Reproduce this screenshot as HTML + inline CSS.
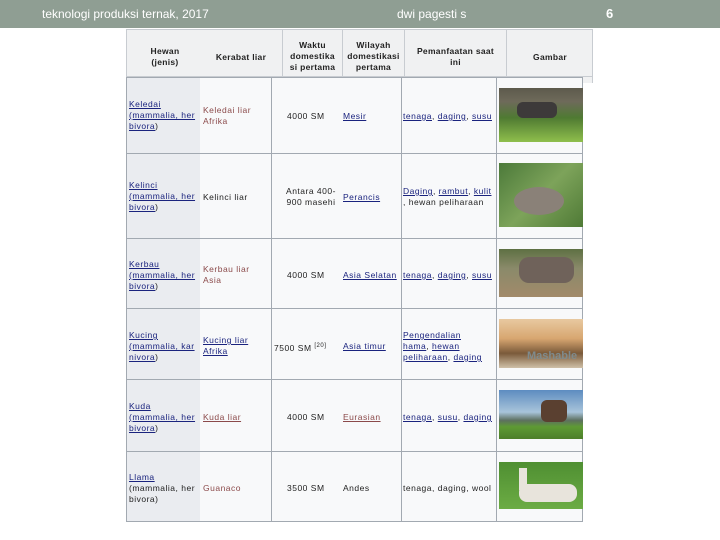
<!DOCTYPE html>
<html><head><meta charset="utf-8"><style>
*{margin:0;padding:0;box-sizing:border-box}
body{width:720px;height:540px;background:#fff;position:relative;overflow:hidden;font-family:"Liberation Sans",sans-serif}
.bar{position:absolute;left:0;top:0;width:720px;height:28px;background:#8f9e93;color:#fff}
.bar span{position:absolute;top:7px;font-size:12px}
.a{position:absolute}
.t{position:absolute;font-size:8.5px;line-height:11px;color:#222;letter-spacing:0.5px;white-space:nowrap}
.l{color:#1a237e;text-decoration:underline}
.r{color:#8b4a4a}
.h{font-weight:bold;text-align:center;color:#222;letter-spacing:0.3px}
</style></head><body>
<div class="bar"><span style="left:42px">teknologi produksi ternak, 2017</span><span style="left:397px">dwi pagesti s</span><span style="left:606px;font-weight:bold;font-size:13px;top:6px">6</span></div>
<!-- header -->
<div class="a" style="left:126px;top:29px;width:467px;height:48px;background:#f0f1f2;border:1px solid #c8ccd1"></div>
<div class="a" style="left:126px;top:77px;width:467px;height:6px;background:#f0f1f2;border-right:1px solid #c8ccd1"></div>
<div class="a" style="left:282px;top:29px;width:1px;height:48px;background:#c8ccd1"></div>
<div class="a" style="left:342px;top:29px;width:1px;height:48px;background:#c8ccd1"></div>
<div class="a" style="left:404px;top:29px;width:1px;height:48px;background:#c8ccd1"></div>
<div class="a" style="left:506px;top:29px;width:1px;height:48px;background:#c8ccd1"></div>
<div class="t h" style="left:130px;top:46px;width:70px">Hewan<br>(jenis)</div>
<div class="t h" style="left:200px;top:52px;width:82px">Kerabat liar</div>
<div class="t h" style="left:283px;top:40px;width:59px">Waktu<br>domestika<br>si pertama</div>
<div class="t h" style="left:343px;top:40px;width:61px">Wilayah<br>domestikasi<br>pertama</div>
<div class="t h" style="left:405px;top:46px;width:101px">Pemanfaatan saat<br>ini</div>
<div class="t h" style="left:507px;top:52px;width:86px">Gambar</div>
<!-- body -->
<div class="a" style="left:126px;top:77px;width:457px;height:445px;background:#f8f9fa;border:1px solid #a2a9b1"></div>
<div class="a" style="left:127px;top:78px;width:73px;height:443px;background:#eaecf0"></div>
<div class="a" style="left:271px;top:77px;width:1px;height:445px;background:#a2a9b1"></div>
<div class="a" style="left:401px;top:77px;width:1px;height:445px;background:#a2a9b1"></div>
<div class="a" style="left:496px;top:77px;width:1px;height:445px;background:#a2a9b1"></div>
<div class="a" style="left:126px;top:153px;width:457px;height:1px;background:#a2a9b1"></div>
<div class="a" style="left:126px;top:238px;width:457px;height:1px;background:#a2a9b1"></div>
<div class="a" style="left:126px;top:308px;width:457px;height:1px;background:#a2a9b1"></div>
<div class="a" style="left:126px;top:379px;width:457px;height:1px;background:#a2a9b1"></div>
<div class="a" style="left:126px;top:451px;width:457px;height:1px;background:#a2a9b1"></div>
<!-- row1 -->
<div class="t" style="left:129px;top:99px"><span class="l">Keledai</span><br><span class="l">(mammalia, her</span><br><span class="l">bivora</span>)</div>
<div class="t r" style="left:203px;top:105px">Keledai liar<br>Afrika</div>
<div class="t" style="left:287px;top:111px">4000 SM</div>
<div class="t l" style="left:343px;top:111px">Mesir</div>
<div class="t" style="left:403px;top:111px"><span class="l">tenaga</span>, <span class="l">daging</span>, <span class="l">susu</span></div>
<!-- row2 -->
<div class="t" style="left:129px;top:180px"><span class="l">Kelinci</span><br><span class="l">(mammalia, her</span><br><span class="l">bivora</span>)</div>
<div class="t" style="left:203px;top:192px">Kelinci liar</div>
<div class="t" style="left:281px;top:186px;text-align:center;width:60px">Antara 400-<br>900 masehi</div>
<div class="t l" style="left:343px;top:192px">Perancis</div>
<div class="t" style="left:403px;top:186px"><span class="l">Daging</span>, <span class="l">rambut</span>, <span class="l">kulit</span><br>, hewan peliharaan</div>
<!-- row3 -->
<div class="t" style="left:129px;top:259px"><span class="l">Kerbau</span><br><span class="l">(mammalia, her</span><br><span class="l">bivora</span>)</div>
<div class="t r" style="left:203px;top:264px">Kerbau liar<br>Asia</div>
<div class="t" style="left:287px;top:270px">4000 SM</div>
<div class="t l" style="left:343px;top:270px">Asia Selatan</div>
<div class="t" style="left:403px;top:270px"><span class="l">tenaga</span>, <span class="l">daging</span>, <span class="l">susu</span></div>
<!-- row4 -->
<div class="t" style="left:129px;top:330px"><span class="l">Kucing</span><br><span class="l">(mammalia, kar</span><br><span class="l">nivora</span>)</div>
<div class="t" style="left:203px;top:335px"><span class="l">Kucing liar</span><br><span class="l">Afrika</span></div>
<div class="t" style="left:274px;top:341px">7500 SM <sup style="font-size:6px">[20]</sup></div>
<div class="t l" style="left:343px;top:341px">Asia timur</div>
<div class="t" style="left:403px;top:330px"><span class="l">Pengendalian</span><br><span class="l">hama</span>, <span class="l">hewan</span><br><span class="l">peliharaan</span>, <span class="l">daging</span></div>
<!-- row5 -->
<div class="t" style="left:129px;top:401px"><span class="l">Kuda</span><br><span class="l">(mammalia, her</span><br><span class="l">bivora</span>)</div>
<div class="t r" style="left:203px;top:412px;text-decoration:underline">Kuda liar</div>
<div class="t" style="left:287px;top:412px">4000 SM</div>
<div class="t r" style="left:343px;top:412px;text-decoration:underline">Eurasian</div>
<div class="t" style="left:403px;top:412px"><span class="l">tenaga</span>, <span class="l">susu</span>, <span class="l">daging</span></div>
<!-- row6 -->
<div class="t" style="left:129px;top:472px"><span class="l">Llama</span><br>(mammalia, her<br>bivora)</div>
<div class="t r" style="left:203px;top:483px">Guanaco</div>
<div class="t" style="left:287px;top:483px">3500 SM</div>
<div class="t" style="left:343px;top:483px">Andes</div>
<div class="t" style="left:403px;top:483px">tenaga, daging, wool</div>
<!-- images -->
<div class="a" style="left:499px;top:88px;width:84px;height:54px;background:linear-gradient(#5d5a4c 0,#6e6a5a 25%,#4f7a32 55%,#8fbf4c 100%)"><div class="a" style="left:18px;top:14px;width:40px;height:16px;background:#3d3a3a;border-radius:6px"></div></div>
<div class="a" style="left:499px;top:163px;width:84px;height:64px;background:linear-gradient(135deg,#4c7a3a,#7da35a 50%,#4f7a36)"><div class="a" style="left:15px;top:24px;width:50px;height:28px;background:#8a8178;border-radius:50%"></div></div>
<div class="a" style="left:499px;top:249px;width:84px;height:48px;background:linear-gradient(#5e7043 0,#8a8a6a 40%,#a28a6a 100%)"><div class="a" style="left:20px;top:8px;width:55px;height:26px;background:#6f625a;border-radius:10px"></div></div>
<div class="a" style="left:499px;top:319px;width:84px;height:49px;background:linear-gradient(#e8c9a0 0,#d7a670 40%,#7a5a3a 70%,#cfc0a8 100%)"><span class="a" style="left:28px;top:31px;font-size:11px;font-weight:bold;color:#7f8a8c">Mashable</span></div>
<div class="a" style="left:499px;top:390px;width:84px;height:49px;background:linear-gradient(#5d8cc0 0,#a8c4da 45%,#5d7060 62%,#5e9a34 75%,#4d7f2a 100%)"><div class="a" style="left:42px;top:10px;width:26px;height:22px;background:#5a4030;border-radius:6px"></div></div>
<div class="a" style="left:499px;top:462px;width:84px;height:47px;background:linear-gradient(#4f8f32,#6cac44)"><div class="a" style="left:20px;top:22px;width:58px;height:18px;background:#e8e4dc;border-radius:8px"></div><div class="a" style="left:20px;top:6px;width:8px;height:22px;background:#e8e4dc"></div></div>
</body></html>
